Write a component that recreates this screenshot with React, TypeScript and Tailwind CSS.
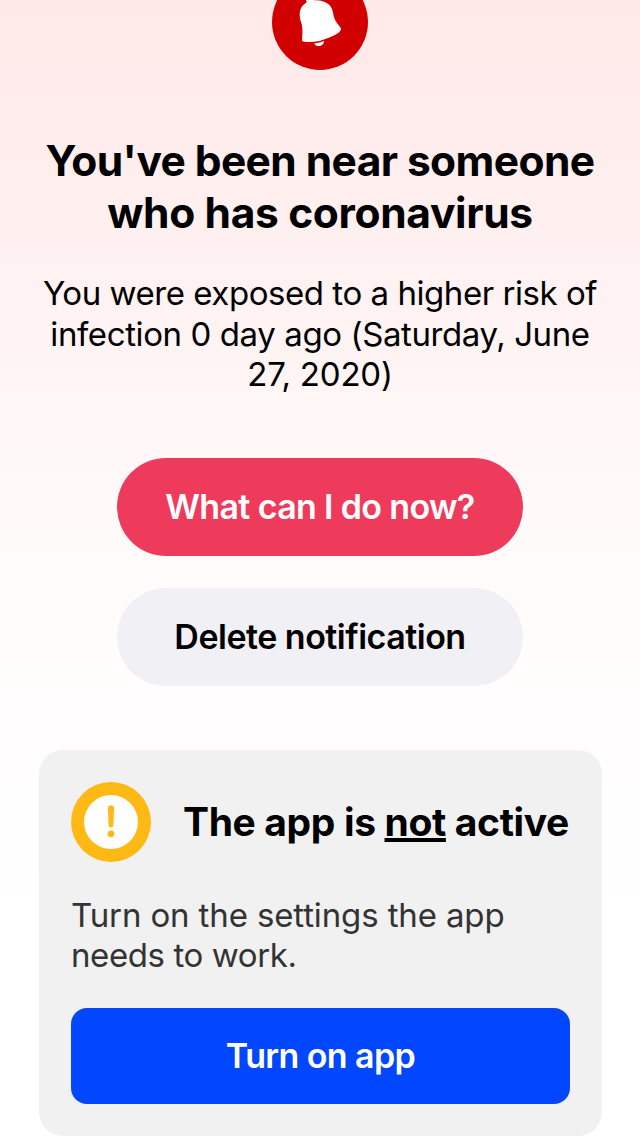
export default function App() {
  return (
    <main className="h-[1136px] w-[640px] overflow-hidden bg-[linear-gradient(180deg,#ffe8e8_0px,#ffefef_200px,#fff5f5_380px,#fffafa_530px,#fffdfd_700px,#fff_950px)] font-['Inter',sans-serif] text-black">
      <div className="mx-auto flex h-[70px] w-24 items-end overflow-hidden">
        <svg className="h-24 w-24 shrink-0" viewBox="0 0 96 96">
          <circle cx="48" cy="48" r="48" fill="#d10000" />
          <g fill="#fff">
            <path d="M35.5 28C42 25 52 25.5 57.5 31C62 36 60.5 42 64 47.5C66.5 51.5 69 53 69 55.5C68 59 62 61.5 58 63.2C50 66.8 42 68.5 35 68C31 67.8 30 67.8 30 65.5C30.5 60 31 54 29.2 48.5C27.5 44 27 39 28.8 34.5C30.5 31 33 29.2 35.5 28Z" />
            <circle cx="38" cy="25.5" r="4" />
            <path d="M42.2 69.4C45.5 69.2 49.5 68.2 52 67C52 73.3 43.5 73 42.2 69.4Z" />
          </g>
        </svg>
      </div>
      <h1 className="mt-[65px] text-center text-[42.5px] leading-[52px] font-bold tracking-[-0.6px] whitespace-nowrap">
        You've been near someone<br /><span className="tracking-[-0.35px]">who has coronavirus</span>
      </h1>
      <p className="mt-[34px] text-center text-[33px] leading-[40.5px] tracking-[-0.45px] whitespace-nowrap">
        You were exposed to a higher risk of<br /><span className="tracking-[-0.4px]">infection 0 day ago (Saturday, June</span><br /><span className="tracking-[-0.2px]">27, 2020)</span>
      </p>
      <div className="mt-[63px] flex flex-col items-center gap-8">
        <button className="h-[98px] w-[406px] rounded-full bg-[#ef3b5b] text-[34px] font-semibold tracking-[-0.65px] text-white">What can I do now?</button>
        <button className="h-[98px] w-[406px] rounded-full bg-[#f0f0f5] text-[34px] font-semibold tracking-[-0.5px]">Delete notification</button>
      </div>
      <section className="mt-16 ml-[39px] h-[386px] w-[563px] rounded-3xl bg-[#f1f1f1] p-8">
        <div className="flex h-20 items-center gap-8">
          <svg className="h-20 w-20 shrink-0" viewBox="0 0 80 80">
            <circle cx="40" cy="40" r="40" fill="#ffb915" />
            <circle cx="40" cy="40" r="27" fill="#fff" />
            <path d="M36.9 26.2C36.8 22.3 43.2 22.3 43.1 26.2L42.4 43.2C42.3 46.1 37.7 46.1 37.6 43.2Z" fill="#ffb915" />
            <circle cx="40" cy="51.8" r="3.4" fill="#ffb915" />
          </svg>
          <h2 className="text-[39px] leading-[48px] font-bold tracking-[-0.36px] whitespace-nowrap">
            The app is <span className="underline decoration-4 underline-offset-2 [text-decoration-skip-ink:none]">not</span> active
          </h2>
        </div>
        <p className="mt-[33px] text-[33px] leading-10 tracking-[-0.13px] whitespace-nowrap text-[#333]">
          Turn on the settings the app<br /><span className="tracking-[-0.4px]">needs to work.</span>
        </p>
        <button className="mt-[33px] h-24 w-full rounded-2xl bg-[#0047ff] text-[34px] font-semibold tracking-[-0.6px] text-white">Turn on app</button>
      </section>
    </main>
  );
}
